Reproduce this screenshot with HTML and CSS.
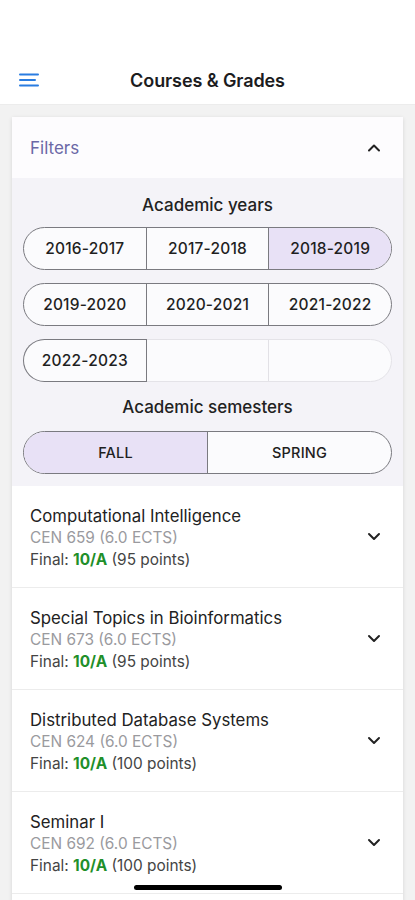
FILE: index.html
```html
<!DOCTYPE html>
<html lang="en">
<head>
  <meta charset="UTF-8">
  <meta name="viewport" content="width=device-width, initial-scale=1.0">
  <title>Courses &amp; Grades</title>
  <link rel="stylesheet" href="styles.css">
</head>
<body>
  <div class="status-space"></div>

  <header class="topbar">
    <svg class="menu-icon" width="20" height="14" viewBox="0 0 20 14">
      <path d="M1 1.5h18M1 7h15M1 12.5h18" stroke="#2a7de1" stroke-width="2" stroke-linecap="round" fill="none"/>
    </svg>
    <h1>Courses &amp; Grades</h1>
  </header>

  <main class="content">
    <div class="card">
      <!-- Filters header -->
      <div class="filters-head">
        <span>Filters</span>
        <svg class="chev" width="14" height="9" viewBox="0 0 14 9">
          <path d="M2 7.5L7 2.5l5 5" stroke="#222" stroke-width="2" stroke-linecap="round" stroke-linejoin="round" fill="none"/>
        </svg>
      </div>

      <div class="filters-body">
        <p class="group-title">Academic years</p>
        <div class="segment">
          <div class="seg">2016-2017</div>
          <div class="seg">2017-2018</div>
          <div class="seg active">2018-2019</div>
        </div>
        <div class="segment">
          <div class="seg">2019-2020</div>
          <div class="seg">2020-2021</div>
          <div class="seg">2021-2022</div>
        </div>
        <div class="segment partial">
          <div class="seg">2022-2023</div>
          <div class="seg empty"></div>
          <div class="seg empty"></div>
        </div>

        <p class="group-title second">Academic semesters</p>
        <div class="segment two">
          <div class="seg active caps">FALL</div>
          <div class="seg caps">SPRING</div>
        </div>
      </div>

      <!-- Course list -->
      <div class="course">
        <div class="course-info">
          <div class="course-name">Computational Intelligence</div>
          <div class="course-code">CEN 659 (6.0 ECTS)</div>
          <div class="course-final">Final: <b>10/A</b> (95 points)</div>
        </div>
        <svg class="chev" width="14" height="9" viewBox="0 0 14 9">
          <path d="M2 2l5 5 5-5" stroke="#222" stroke-width="2" stroke-linecap="round" stroke-linejoin="round" fill="none"/>
        </svg>
      </div>
      <div class="course">
        <div class="course-info">
          <div class="course-name">Special Topics in Bioinformatics</div>
          <div class="course-code">CEN 673 (6.0 ECTS)</div>
          <div class="course-final">Final: <b>10/A</b> (95 points)</div>
        </div>
        <svg class="chev" width="14" height="9" viewBox="0 0 14 9">
          <path d="M2 2l5 5 5-5" stroke="#222" stroke-width="2" stroke-linecap="round" stroke-linejoin="round" fill="none"/>
        </svg>
      </div>
      <div class="course">
        <div class="course-info">
          <div class="course-name">Distributed Database Systems</div>
          <div class="course-code">CEN 624 (6.0 ECTS)</div>
          <div class="course-final">Final: <b>10/A</b> (100 points)</div>
        </div>
        <svg class="chev" width="14" height="9" viewBox="0 0 14 9">
          <path d="M2 2l5 5 5-5" stroke="#222" stroke-width="2" stroke-linecap="round" stroke-linejoin="round" fill="none"/>
        </svg>
      </div>
      <div class="course">
        <div class="course-info">
          <div class="course-name">Seminar I</div>
          <div class="course-code">CEN 692 (6.0 ECTS)</div>
          <div class="course-final">Final: <b>10/A</b> (100 points)</div>
        </div>
        <svg class="chev" width="14" height="9" viewBox="0 0 14 9">
          <path d="M2 2l5 5 5-5" stroke="#222" stroke-width="2" stroke-linecap="round" stroke-linejoin="round" fill="none"/>
        </svg>
      </div>
      <div class="course-peek"></div>
    </div>
  </main>

  <div class="home-bar"></div>
</body>
</html>
```

FILE: styles.css
```css
html, body {
  margin: 0;
  padding: 0;
  height: 900px;
  overflow: hidden;
}
body {
  background-color: #f2f2f2;
  font-family: Inter, "Liberation Sans", sans-serif;
  color: #1c1c1e;
}
.status-space {
  height: 56px;
  background-color: #fff;
}
.topbar {
  height: 48px;
  background-color: #fff;
  display: flex;
  align-items: center;
  justify-content: center;
  border-bottom: 1px solid #ececec;
  position: relative;
}
.topbar h1 {
  margin: 0;
  font-size: 18px;
  font-weight: 600;
  letter-spacing: -0.1px;
}
.menu-icon {
  position: absolute;
  left: 19px;
  top: 17px;
}
.content {
  padding: 12px 12px 0;
}
.card {
  background-color: #fff;
  box-shadow: 0 1px 4px rgba(0, 0, 0, 0.12);
  border-radius: 2px;
}
.filters-head {
  height: 61px;
  padding: 0 22px 0 18px;
  display: flex;
  align-items: center;
  justify-content: space-between;
  background-color: #fdfcfe;
  color: #6b68a6;
  font-size: 17px;
}
.filters-body {
  background-color: #f4f3f8;
  padding: 13px 11px 12px;
}
.group-title {
  margin: 4px 0 12px;
  line-height: 20px;
  text-align: center;
  font-size: 17px;
  font-weight: 500;
  color: #222;
}
.group-title.second {
  margin-top: 15px;
  margin-bottom: 14px;
}
.segment {
  display: flex;
  height: 41px;
  border: 1px solid #7a7a80;
  border-radius: 22px;
  overflow: hidden;
  margin-bottom: 13px;
  background-color: #fbfbfd;
}
.segment.partial {
  border-color: #e4e3e8;
  overflow: visible;
}
.segment.partial .seg:first-child {
  border-radius: 22px 0 0 22px;
  box-shadow: 0 0 0 1px #7a7a80;
  background-color: #fbfbfd;
}
.segment.partial .seg:nth-child(2) {
  border-left-color: #7a7a80;
}
.seg {
  flex: 1;
  display: flex;
  align-items: center;
  justify-content: center;
  font-size: 15.5px;
  font-weight: 500;
  color: #1f1f1f;
  letter-spacing: 0.2px;
}
.seg + .seg {
  border-left: 1px solid #7a7a80;
}
.seg.empty {
  border-left-color: #e2e1e6;
}
.seg.active {
  background-color: #e8e1f6;
}
.segment.two {
  margin-bottom: 0;
}
.seg.caps {
  font-size: 14.5px;
}
.course {
  height: 102px;
  border-bottom: 1px solid #ececec;
  padding: 4px 22px 0 18px;
  display: flex;
  align-items: center;
  justify-content: space-between;
  box-sizing: border-box;
}
.course-name {
  font-size: 16.8px;
  color: #222;
  line-height: 21px;
}
.course-code,
.course-final {
  font-size: 15.4px;
  line-height: 22px;
}
.course-code {
  color: #9a9a9e;
}
.course-final {
  color: #444;
}
.course-final b {
  color: #1f8f2a;
  font-weight: 700;
}
.course .chev {
  margin-top: -4px;
}
.course-peek {
  height: 8px;
}
.home-bar {
  position: absolute;
  left: 134px;
  top: 885px;
  width: 148px;
  height: 5px;
  border-radius: 3px;
  background-color: #000;
}
```
